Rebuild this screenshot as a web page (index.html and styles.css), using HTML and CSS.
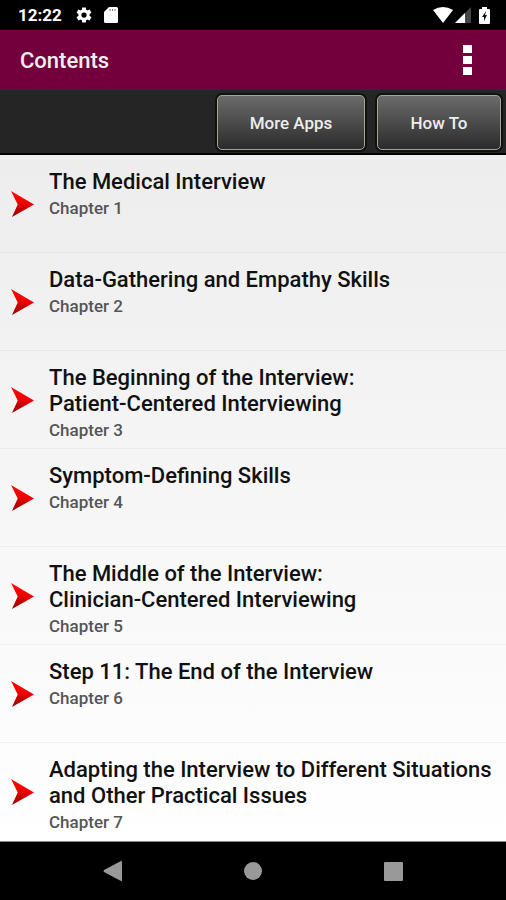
FILE: index.html
```html
<!DOCTYPE html>
<html lang="en">
<head>
  <meta charset="UTF-8">
  <meta name="viewport" content="width=device-width, initial-scale=1">
  <title>Contents</title>
  <link rel="stylesheet" href="styles.css">
</head>
<body>
  <div class="status-bar">
    <span class="clock">12:22</span>
    <svg class="gear" width="18" height="18" viewBox="0 0 24 24"><path fill="#fff" fill-rule="evenodd" d="M19.400 13a7.500 7.500 0 0 0 0-2l2.500-2-2.400-4.200-3 1.200a7.500 7.500 0 0 0-1.700-1L14.400 2H9.600l-.4 3a7.500 7.500 0 0 0-1.700 1l-3-1.200L2.100 9l2.500 2a7.500 7.500 0 0 0 0 2l-2.500 2 2.400 4.200 3-1.200a7.500 7.500 0 0 0 1.700 1l.4 3h4.800l.4-3a7.500 7.500 0 0 0 1.700-1l3 1.200 2.400-4.200zM12 15.500a3.500 3.500 0 1 1 0-7 3.500 3.500 0 0 1 0 7z"/></svg>
    <svg class="card" width="14" height="16" viewBox="0 0 14 16"><path fill="#fff" d="M5 0h7.500Q14 0 14 1.500v13q0 1.500-1.500 1.500h-11Q0 16 0 14.500V5z"/><path stroke="#777" stroke-width="1" d="M6 2v2M8.500 2v2M11 2v2"/></svg>
    <svg class="wifi" width="20" height="16" viewBox="0 0 20 16"><path fill="#fff" d="M0 3Q10-3 20 3L10 16z"/></svg>
    <svg class="signal" width="16" height="16" viewBox="0 0 16 16"><path fill="#444" d="M16 0v16H0z"/><path fill="#fff" d="M10 6v10H0z"/></svg>
    <svg class="battery" width="11" height="17" viewBox="0 0 11 17"><path fill="#fff" d="M3 0h5v2h2q1 0 1 1v13q0 1-1 1H1q-1 0-1-1V3q0-1 1-1h2z"/><path fill="#111" d="M7 4L3 10h2v4l3-6H6z"/></svg>
  </div>

  <header class="title-bar">
    <h1>Contents</h1>
    <button class="menu" aria-label="More options">
      <svg width="10" height="32" viewBox="0 0 10 32"><path fill="#fff" d="M1 1h9v8H1zM1 12h9v8H1zM1 23h9v8H1z"/></svg>
    </button>
  </header>

  <div class="toolbar">
    <button class="more-apps">More Apps</button>
    <button class="how-to">How To</button>
  </div>

  <!-- shared arrow artwork -->
  <svg class="defs" width="0" height="0">
    <defs>
      <linearGradient id="red" x1="0.6" y1="0" x2="0.4" y2="1">
        <stop offset="0.2" stop-color="#fa0808"/>
        <stop offset="0.5" stop-color="#ee0000"/>
        <stop offset="0.7" stop-color="#c00000"/>
        <stop offset="1" stop-color="#a80000"/>
      </linearGradient>
      <symbol id="arrow" viewBox="0 0 24 28">
        <path fill="url(#red)" d="M0 0L24 14 1 27 7 14z"/>
      </symbol>
    </defs>
  </svg>

  <ul class="chapters">
    <li><svg class="arrow"><use href="#arrow"/></svg><div><h2>The Medical Interview</h2><p>Chapter 1</p></div></li>
    <li><svg class="arrow"><use href="#arrow"/></svg><div><h2>Data-Gathering and Empathy Skills</h2><p>Chapter 2</p></div></li>
    <li><svg class="arrow"><use href="#arrow"/></svg><div><h2>The Beginning of the Interview:<br>Patient-Centered Interviewing</h2><p>Chapter 3</p></div></li>
    <li><svg class="arrow"><use href="#arrow"/></svg><div><h2>Symptom-Defining Skills</h2><p>Chapter 4</p></div></li>
    <li><svg class="arrow"><use href="#arrow"/></svg><div><h2>The Middle of the Interview:<br>Clinician-Centered Interviewing</h2><p>Chapter 5</p></div></li>
    <li><svg class="arrow"><use href="#arrow"/></svg><div><h2>Step 11: The End of the Interview</h2><p>Chapter 6</p></div></li>
    <li><svg class="arrow"><use href="#arrow"/></svg><div><h2>Adapting the Interview to Different Situations and Other Practical Issues</h2><p>Chapter 7</p></div></li>
  </ul>

  <nav class="nav-bar">
    <button aria-label="Back"><svg width="20" height="22" viewBox="0 0 20 22"><path fill="#999" d="M18 1q1-1 1 1v18q0 2-1 1L1 12q-1-1 0-2z"/></svg></button>
    <button aria-label="Home"><svg width="20" height="20" viewBox="0 0 20 20"><circle cx="10" cy="10" r="9" fill="#999"/></svg></button>
    <button aria-label="Recent apps"><svg width="20" height="20" viewBox="0 0 20 20"><rect width="19" height="19" x="1" y="1" rx="1" fill="#999"/></svg></button>
  </nav>
</body>
</html>
```
FILE: styles.css
```css
* {
  box-sizing: border-box;
}
body {
  margin: 0;
  min-height: 100vh;
  display: flex;
  flex-direction: column;
  background: #000;
  color: #111;
  font-family: Roboto, sans-serif;
}
button {
  border: none;
  background: none;
  padding: 0;
  color: #eee;
  font-family: inherit;
  cursor: pointer;
}
svg {
  display: block;
  flex: none;
}
.defs {
  position: absolute;
}
h1, h2, p {
  margin: 0;
}
.status-bar {
  display: flex;
  align-items: center;
  height: 30px;
  padding: 0 16px 0 18px;
  color: #fff;
}
.clock {
  font-size: 17px;
  font-weight: 700;
}
.gear {
  margin-left: 13px;
}
.card {
  margin-left: 11px;
}
.wifi {
  margin-left: auto;
}
.signal {
  margin-left: 2px;
}
.battery {
  margin-left: 8px;
}
.title-bar {
  display: flex;
  align-items: center;
  justify-content: space-between;
  height: 60px;
  padding: 0 34px 0 20px;
  background: #73003c;
  color: #eee;
}
h1 {
  font-size: 22px;
  font-weight: 500;
}
.toolbar {
  display: flex;
  justify-content: flex-end;
  gap: 12px;
  height: 65px;
  padding: 5px;
  background: #252525;
  border-bottom: 2px solid #000;
}
.toolbar button {
  height: 55px;
  border: 1px solid #a5a595;
  border-radius: 5px;
  background: linear-gradient(#6b6b6b, #2b2b2b);
  box-shadow: 0 0 0 2px #111;
  font-size: 17px;
  font-weight: 500;
}
.more-apps {
  width: 148px;
}
.how-to {
  width: 124px;
}
.chapters {
  margin: 0;
  padding: 0;
  list-style: none;
  background: linear-gradient(#ededed, #fff);
  border-bottom: 1px solid #888;
}
.chapters li {
  display: flex;
  gap: 15px;
  min-height: 98px;
  padding: 14px 0 0 11px;
  border-bottom: 1px solid rgba(0, 0, 0, 0.04);
}
.chapters li:last-child {
  border-bottom: none;
}
.arrow {
  width: 23px;
  height: 27px;
  margin-top: 22px;
}
h2 {
  font-size: 22px;
  line-height: 26px;
  font-weight: 500;
}
.chapters p {
  color: #555;
  font-size: 17px;
  line-height: 26px;
  font-weight: 500;
}
.nav-bar {
  flex: 1;
  display: flex;
  align-items: center;
  justify-content: center;
  gap: 120px;
}
```
